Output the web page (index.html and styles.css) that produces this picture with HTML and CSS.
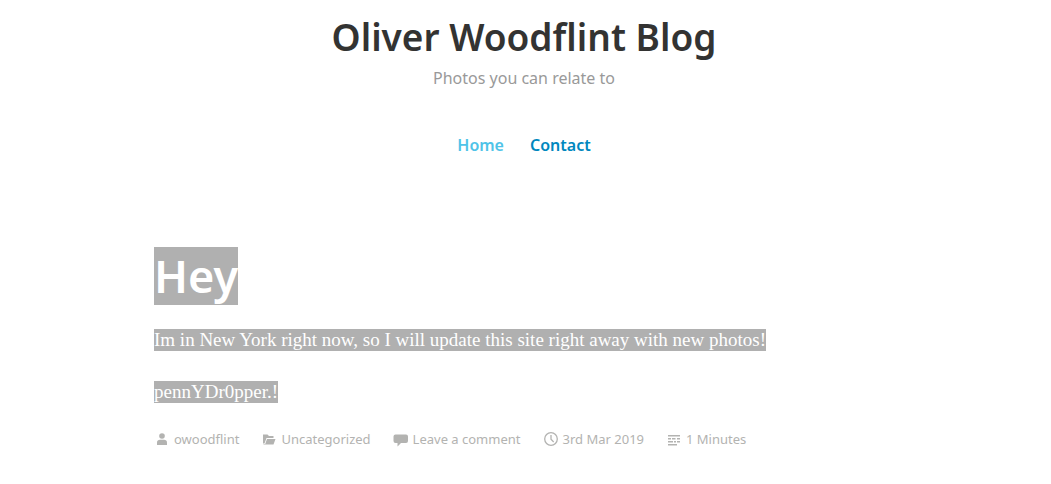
FILE: index.html
```html
<!DOCTYPE html>
<html lang="en">
<head>
<meta charset="utf-8">
<meta name="viewport" content="width=device-width, initial-scale=1">
<title>Oliver Woodflint Blog</title>
<link rel="stylesheet" href="styles.css">
</head>
<body>
<header class="site-header">
  <h1 class="site-title">Oliver Woodflint Blog</h1>
  <p class="site-tagline">Photos you can relate to</p>
  <nav class="site-nav" aria-label="Main">
    <a class="nav-link nav-link-current" href="#home">Home</a>
    <a class="nav-link" href="#contact">Contact</a>
  </nav>
</header>
<main class="site-main">
  <article class="post">
    <h2 class="post-title"><mark class="selected">Hey</mark></h2>
    <div class="post-body">
      <p><mark class="selected">Im in New York right now, so I will update this site right away with new photos!</mark></p>
      <p><mark class="selected">pennYDr0pper.!</mark></p>
    </div>
    <footer class="post-meta">
      <a class="meta-item" href="#author"><svg class="meta-icon" viewBox="0 0 16 16" aria-hidden="true"><circle cx="8" cy="5" r="2.8"/><path d="M3 14v-2.600C3 9.700 4.200 8.800 6 8.800h4c1.800 0 3 .9 3 2.600V14z"/></svg>owoodflint</a>
      <a class="meta-item" href="#category"><svg class="meta-icon" viewBox="0 0 16 16" aria-hidden="true"><path d="M2 3.500h4.500l1.500 1.500h4.500v2H5.500L3.500 12.500H2z"/><path d="M6 8h8.500l-2 5.500H2.500V13H4.200z"/></svg>Uncategorized</a>
      <a class="meta-item" href="#comments"><svg class="meta-icon" viewBox="0 0 16 16" aria-hidden="true"><path d="M2.500 3.500h10.500Q15 3.500 15 5.500v4.500Q15 12 13 12H8l-3.500 3.500V12h-2Q.5 12 .5 10V5.500Q.5 3.500 2.500 3.500z"/></svg>Leave a comment</a>
      <a class="meta-item" href="#date"><svg class="meta-icon" viewBox="0 0 16 16" aria-hidden="true"><circle class="meta-stroke" cx="8" cy="8" r="6.300"/><path class="meta-stroke" d="M8 4v4.300l2.700 2.700"/></svg>3rd Mar 2019</a>
      <span class="meta-item"><svg class="meta-icon" viewBox="0 0 16 16" aria-hidden="true"><path d="M2 4h12v1.400H2zM2 7h3v1.400H2zM6 7h3.500v1.400H6zM11 7h3v1.400h-3zM2 10h5v1.400H2zM8 10h2v1.400H8zM11 10h3v1.400h-3zM2 13h9v1.400H2z"/></svg>1 Minutes</span>
    </footer>
  </article>
</main>
</body>
</html>
```
FILE: styles.css
```css
* {
  box-sizing: border-box;
}

body {
  margin: 0;
  padding: 12px 3px 32px 0;
  background: #fff;
  color: #333332;
  font-family: "Noto Sans", sans-serif;
}

h1, h2, p {
  margin: 0;
}

.site-header {
  display: flex;
  flex-direction: column;
  align-items: center;
  padding: 0 24px;
  text-align: center;
}

.site-title {
  font-size: 37px;
  font-weight: 600;
  line-height: 50px;
}

.site-tagline {
  margin-top: 2px;
  color: #999;
  font-size: 16px;
  line-height: 28px;
}

.site-nav {
  display: flex;
  flex-wrap: wrap;
  gap: 26px;
  margin-top: 39px;
}

.nav-link {
  color: #0087be;
  font-size: 16px;
  font-weight: 600;
  line-height: 28px;
  text-decoration: none;
}

.nav-link-current {
  color: #4fc3e8;
}

.site-main {
  max-width: 740px;
  margin: 88px auto 0;
}

.selected {
  display: inline-block;
  background: #b0b0b0;
  color: #fff;
  line-height: 22px;
  vertical-align: top;
}

.post-title {
  font-size: 45px;
  font-weight: 600;
  line-height: 58px;
}

.post-title .selected {
  line-height: 58px;
}

.post-body {
  display: flex;
  flex-direction: column;
  gap: 26px;
  margin-top: 24px;
  font-family: "Liberation Serif", serif;
  font-size: 19px;
  line-height: 26px;
}

.post-meta {
  display: flex;
  flex-wrap: wrap;
  gap: 22px;
  margin-top: 18px;
  font-size: 13px;
  line-height: 28px;
}

.meta-item {
  display: flex;
  align-items: center;
  gap: 4px;
  color: #b3b3b1;
  text-decoration: none;
}

.meta-icon {
  width: 16px;
  height: 16px;
  fill: currentColor;
}

.meta-stroke {
  fill: none;
  stroke: currentColor;
  stroke-width: 1.3;
}
```
